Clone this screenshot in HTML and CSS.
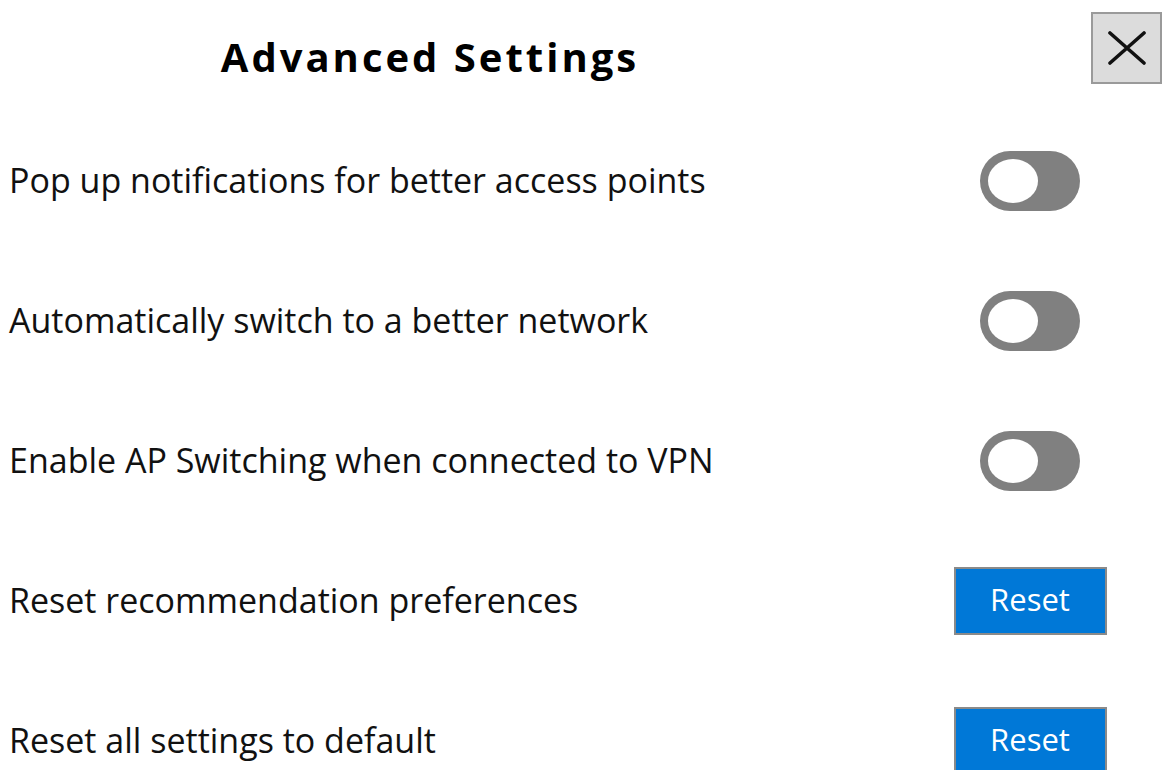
FILE: index.html
```html
<!DOCTYPE html>
<html lang="en">
<head>
<meta charset="utf-8">
<title>Advanced Settings</title>
<link rel="stylesheet" href="styles.css">
</head>
<body>
<div class="dialog">
  <header class="dialog-header">
    <h1 class="dialog-title">Advanced Settings</h1>
    <button class="close-btn" aria-label="Close">
      <svg viewBox="0 0 40 34" width="40" height="34">
        <path d="M3 2 L37 32 M37 2 L3 32" stroke="#111" stroke-width="3.6" fill="none" stroke-linecap="round"/>
      </svg>
    </button>
  </header>

  <div class="setting-row">
    <span class="setting-label">Pop up notifications for better access points</span>
    <div class="setting-control"><span class="toggle"><span class="knob"></span></span></div>
  </div>
  <div class="setting-row">
    <span class="setting-label">Automatically switch to a better network</span>
    <div class="setting-control"><span class="toggle"><span class="knob"></span></span></div>
  </div>
  <div class="setting-row">
    <span class="setting-label">Enable AP Switching when connected to VPN</span>
    <div class="setting-control"><span class="toggle"><span class="knob"></span></span></div>
  </div>
  <div class="setting-row">
    <span class="setting-label">Reset recommendation preferences</span>
    <div class="setting-control"><button class="reset-btn">Reset</button></div>
  </div>
  <div class="setting-row">
    <span class="setting-label">Reset all settings to default</span>
    <div class="setting-control"><button class="reset-btn">Reset</button></div>
  </div>
</div>
</body>
</html>
```

FILE: styles.css
```css
html, body {
  margin: 0;
  padding: 0;
  background: #ffffff;
  overflow: hidden;
}

body {
  font-family: "Open Sans", "Noto Sans", sans-serif;
  color: #111111;
  width: 1162px;
  height: 770px;
}

.dialog {
  display: flex;
  flex-direction: column;
  height: 770px;
  overflow: hidden;
}

.dialog-header {
  display: flex;
  align-items: flex-start;
  flex: 0 0 111px;
}

.dialog-title {
  width: 860px;
  margin: 0;
  padding-top: 29px;
  text-align: center;
  font-size: 40px;
  font-weight: 700;
  letter-spacing: 3px;
  line-height: 56px;
  color: #000;
}

.close-btn {
  margin: 12px 0 0 231px;
  width: 71px;
  height: 72px;
  padding: 0;
  background: #dcdcdc;
  border: 2px solid #9a9a9a;
  display: flex;
  align-items: center;
  justify-content: center;
  cursor: pointer;
}

.setting-row {
  display: flex;
  align-items: center;
  flex: 0 0 140px;
  padding-left: 9px;
  padding-right: 52px;
}

.setting-label {
  flex: 1;
  font-size: 34px;
  line-height: 44px;
  padding-bottom: 2px;
}

.setting-control {
  width: 160px;
  display: flex;
  justify-content: center;
}

.toggle {
  width: 100px;
  height: 60px;
  border-radius: 30px;
  background: #808080;
  display: flex;
  align-items: center;
  padding-left: 8px;
  box-sizing: border-box;
}

.knob {
  width: 50px;
  height: 44px;
  border-radius: 50%;
  background: #ffffff;
}

.reset-btn {
  width: 153px;
  height: 68px;
  background: #0078d7;
  border: 2px solid #8a8a8a;
  color: #ffffff;
  font-family: "Open Sans", "Noto Sans", sans-serif;
  font-size: 31px;
  padding: 0 0 4px;
  cursor: pointer;
}
```
